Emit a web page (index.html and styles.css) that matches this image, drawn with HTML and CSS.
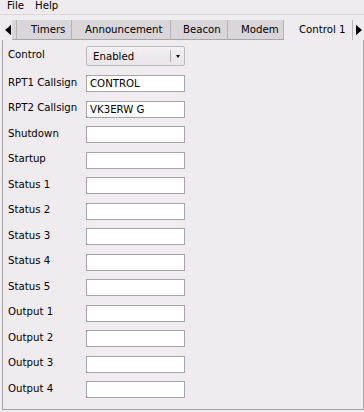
FILE: index.html
```html
<!DOCTYPE html>
<html>
	<head>
		<meta charset="UTF-8">
		<title>Control</title>
		<link rel="stylesheet" href="styles.css">
	</head>
	<body>
		<div class="menubar">
			<span class="menu-item">File</span>
			<span class="menu-item">Help</span>
		</div>
		<div class="tabbar">
			<div class="scroll-btn left"><span class="tri-left"></span></div>
			<div class="tab cut"></div>
			<div class="tab w-timers">Timers</div>
			<div class="tab w-ann">Announcement</div>
			<div class="tab w-beacon">Beacon</div>
			<div class="tab w-modem">Modem</div>
			<div class="tab active">Control 1</div>
			<div class="scroll-btn right"><span class="tri-right"></span></div>
		</div>
		<div class="panel">
			<div class="form">
				<label>Control</label>
				<div class="combo">
					<span class="combo-text">Enabled</span>
					<span class="combo-arrow"></span>
				</div>

				<label>RPT1 Callsign</label>
				<div class="field">CONTROL</div>

				<label>RPT2 Callsign</label>
				<div class="field">VK3ERW G</div>

				<label>Shutdown</label>
				<div class="field"></div>

				<label>Startup</label>
				<div class="field"></div>

				<label>Status 1</label>
				<div class="field"></div>

				<label>Status 2</label>
				<div class="field"></div>

				<label>Status 3</label>
				<div class="field"></div>

				<label>Status 4</label>
				<div class="field"></div>

				<label>Status 5</label>
				<div class="field"></div>

				<label>Output 1</label>
				<div class="field"></div>

				<label>Output 2</label>
				<div class="field"></div>

				<label>Output 3</label>
				<div class="field"></div>

				<label>Output 4</label>
				<div class="field"></div>
			</div>
		</div>
	</body>
</html>
```
FILE: styles.css
```css
*{
	margin: 0;
	padding: 0;
	box-sizing: border-box;
}
body{
	width: 364px;
	height: 412px;
	overflow: hidden;
	background: #efebef;
	font-family: "DejaVu Sans", sans-serif;
	font-size: 10.2px;
	color: #000;
}
.menubar{
	height: 15px;
	display: flex;
	align-items: flex-start;
	padding-left: 7px;
	border-bottom: 1px solid #dcd8dc;
	line-height: 11px;
}
.menu-item{
	margin-right: 11px;
}
.tabbar{
	display: flex;
	height: 20px;
	margin-top: 5px;
}
.scroll-btn{
	flex-shrink: 0;
	height: 20px;
	display: flex;
	align-items: center;
	justify-content: center;
}
.scroll-btn.left{
	width: 12px;
	padding-left: 4px;
}
.scroll-btn.right{
	border-left: 1px solid #b8b4b8;
	width: 13px;
	margin-left: 1px;
}
.tri-left{
	width: 0;
	height: 0;
	border-top: 5px solid transparent;
	border-bottom: 5px solid transparent;
	border-right: 6px solid #000;
}
.tri-right{
	width: 0;
	height: 0;
	border-top: 5px solid transparent;
	border-bottom: 5px solid transparent;
	border-left: 6px solid #000;
}
.tab{
	flex-shrink: 0;
	height: 20px;
	line-height: 20px;
	padding-left: 13px;
	background: #d9d5d9;
	border-right: 1px solid #b4b0b4;
	border-bottom: 1px solid #a8a4a8;
	white-space: nowrap;
	overflow: hidden;
}
.tab.cut{
	width: 5px;
	padding: 0;
}
.w-timers{
	width: 55px;
	padding-left: 14px;
}
.w-ann{
	width: 99px;
}
.w-beacon{
	width: 57px;
	padding-left: 12px;
}
.w-modem{
	width: 56px;
}
.tab.active{
	width: 67px;
	background: #efebef;
	border-bottom: none;
	border-right: none;
	padding-left: 15px;
	line-height: 19px;
}
.panel{
	margin-left: 2px;
	width: 362px;
	height: 370px;
	border: 1px solid #a8a4a8;
	border-top: none;
	padding: 6px 0 0 5px;
}
.form{
	display: grid;
	grid-template-columns: 78px 99px;
	row-gap: 8.5px;
	align-items: center;
}
.form label{
	margin-top: -3px;
	white-space: nowrap;
}
.combo{
	height: 20px;
	border: 1px solid #bcb8bc;
	border-radius: 2px;
	background: linear-gradient(#f3f0f3, #e9e5e9);
	display: flex;
	align-items: center;
	padding-left: 6px;
	margin-bottom: 0.5px;
}
.combo-text{
	flex: 1;
}
.combo-arrow{
	width: 14px;
	height: 12px;
	border-left: 1px solid #b0acb0;
	position: relative;
}
.combo-arrow::after{
	content: "";
	position: absolute;
	left: 5px;
	top: 5px;
	border-left: 2.5px solid transparent;
	border-right: 2.5px solid transparent;
	border-top: 3px solid #000;
}
.field{
	height: 17px;
	background: #fff;
	border: 1px solid #a8a4a8;
	padding-left: 3px;
	line-height: 15px;
}
```
